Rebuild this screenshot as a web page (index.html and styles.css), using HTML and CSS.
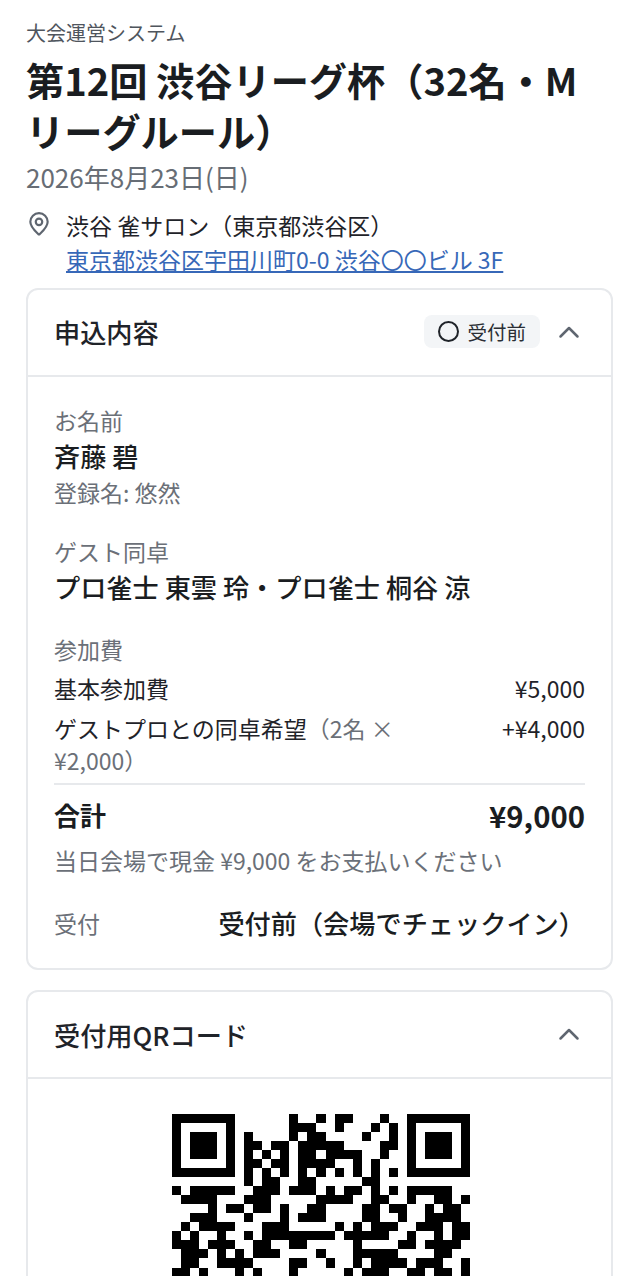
FILE: index.html
```html
<!DOCTYPE html>
<html lang="ja">
<head>
<meta charset="utf-8">
<title>受付</title>
<link rel="stylesheet" href="styles.css">
</head>
<body>
<div class="page">
  <header class="head">
    <div class="sys">大会運営システム</div>
    <h1 class="title">第12回 渋谷リーグ杯（32名・Mリーグルール）</h1>
    <div class="date">2026年8月23日(日)</div>
    <div class="venue">
      <svg class="pin" viewBox="0 0 24 24" width="26" height="26" fill="none" stroke="#5f6670" stroke-width="2" stroke-linecap="round" stroke-linejoin="round"><path d="M20 10c0 5-5.500 9.500-7.400 11.400a.8.8 0 0 1-1.200 0C9.500 19.500 4 15 4 10a8 8 0 0 1 16 0Z"/><circle cx="12" cy="10" r="3"/></svg>
      <div class="vtext">
        <div class="vname">渋谷 雀サロン（東京都渋谷区）</div>
        <a class="vaddr" href="#">東京都渋谷区宇田川町0-0 渋谷〇〇ビル 3F</a>
      </div>
    </div>
  </header>

  <section class="card">
    <div class="card-head">
      <h2 class="card-title">申込内容</h2>
      <span class="badge"><svg viewBox="0 0 21 21" width="21" height="21" fill="none" stroke="#1f2329" stroke-width="2"><circle cx="10.500" cy="10.500" r="9.500"/></svg>受付前</span>
      <svg class="chev" viewBox="0 0 24 24" width="24" height="24" fill="none" stroke="#5f6670" stroke-width="2.500" stroke-linecap="round" stroke-linejoin="round"><path d="m3.500 16.500 8.500-8.500 8.500 8.500"/></svg>
    </div>
    <div class="card-body">
      <div class="group">
        <div class="label">お名前</div>
        <div class="value">斉藤 碧</div>
        <div class="sub">登録名: 悠然</div>
      </div>
      <div class="group">
        <div class="label">ゲスト同卓</div>
        <div class="value">プロ雀士 東雲 玲・プロ雀士 桐谷 涼</div>
      </div>
      <div class="fees">
        <div class="label">参加費</div>
        <div class="fee"><span>基本参加費</span><span class="amt">¥5,000</span></div>
        <div class="fee"><span class="fee-name">ゲストプロとの同卓希望<span class="muted">（2名 ×</span> <span class="muted">¥2,000）</span></span><span class="amt">+¥4,000</span></div>
        <div class="total"><span class="total-label">合計</span><span>¥9,000</span></div>
        <div class="note">当日会場で現金 ¥9,000 をお支払いください</div>
      </div>
      <div class="recv"><span class="recv-label">受付</span><span class="recv-value">受付前（会場でチェックイン）</span></div>
    </div>
  </section>

  <section class="card">
    <div class="card-head">
      <h2 class="card-title card-title-qr">受付用QRコード</h2>
      <svg class="chev" viewBox="0 0 24 24" width="24" height="24" fill="none" stroke="#5f6670" stroke-width="2.500" stroke-linecap="round" stroke-linejoin="round"><path d="m3.500 16.500 8.500-8.500 8.500 8.500"/></svg>
    </div>
    <div class="qr-body">
      <svg class="qr" viewBox="0 0 33 33" width="298" height="298" shape-rendering="crispEdges">
        <path fill-rule="evenodd" d="M0 0h7v7h-7zM1 1v5h5v-5zM2 2h3v3h-3zM26 0h7v7h-7zM27 1v5h5v-5zM28 2h3v3h-3z"/>
        <path fill="none" stroke="#000" stroke-width="1" d="M13 .5h1M16 .5h1M18 .5h2M23 .5h1
        M13 1.500h3M18 1.500h1M22 1.500h1M24 1.500h1
        M8 2.500h1M13 2.500h1M15 2.500h2M21 2.500h1M24 2.500h1
        M8 3.500h2M11 3.500h2M14 3.500h5M23 3.500h2
        M8 4.500h1M10 4.500h1M12 4.500h1M14 4.500h2M17 4.500h4M23 4.500h1
        M8 5.500h2M11 5.500h2M14 5.500h4M20 5.500h1M22 5.500h1
        M8 6.500h1M10 6.500h1M12 6.500h1M14 6.500h1M16 6.500h1M18 6.500h1M20 6.500h1M22 6.500h1M24 6.500h1
        M8 7.500h1M10 7.500h2M14 7.500h2M21 7.500h2
        M0 8.500h1M2 8.500h5M9 8.500h3M13 8.500h3M17 8.500h1M19 8.500h2M22 8.500h1M24 8.500h1M26 8.500h5
        M1 9.500h4M8 9.500h3M16 9.500h4M22 9.500h2M26 9.500h1M29 9.500h2M32 9.500h1
        M4 10.500h1M6 10.500h2M9 10.500h2M12 10.500h1M15 10.500h2M21 10.500h2M24 10.500h2M28 10.500h1M30 10.500h2
        M2 11.500h3M8 11.500h1M12 11.500h1M14 11.500h3M21 11.500h2M25 11.500h1M28 11.500h4
        M1 12.500h1M3 12.500h4M10 12.500h3M18 12.500h1M20 12.500h1M22 12.500h3M27 12.500h3M31 12.500h2
        M0 13.500h1M2 13.500h1M5 13.500h1M8 13.500h1M10 13.500h8M19 13.500h5M26 13.500h1M29 13.500h1M31 13.500h2
        M0 14.500h3M4 14.500h3M9 14.500h2M13 14.500h2M20 14.500h1M25 14.500h2M28 14.500h4
        M1 15.500h3M5 15.500h1M7 15.500h1M9 15.500h3M16 15.500h1M20 15.500h5M29 15.500h2
        M1 16.500h2M5 16.500h4M13 16.500h2M17 16.500h1M20 16.500h1M22 16.500h4M27 16.500h3M32 16.500h1
        M0 17.500h2M3 17.500h1M7 17.500h1M9 17.500h1M13 17.500h1M19 17.500h1M21 17.500h3M26 17.500h2M29 17.500h2M32 17.500h1"/>
      </svg>
    </div>
  </section>
</div>
</body>
</html>
```
FILE: styles.css
```css
* { box-sizing: border-box; }
html, body { margin: 0; padding: 0; }
body { background: #fff; color: #1a1d21; font-family: "Noto Sans CJK JP", "Noto Sans", sans-serif; height: 1276px; overflow: hidden; }
.page { padding: 19px 25px 0 26px; height: 1276px; overflow: hidden; }
.head { margin-bottom: 12px; }
.sys { font-size: 20px; line-height: 28px; color: #4f555d; }
.title { margin: 7px 0 0; font-size: 38.200px; line-height: 51px; font-weight: 700; color: #1a1d21; }
.date { margin-top: 1px; font-size: 26px; line-height: 40px; color: #676d75; }
.venue { display: flex; gap: 14px; margin-top: 11px; }
.pin { flex: none; margin-top: 3px; }
.vtext { line-height: 34px; }
.vname { font-size: 23px; line-height: 34px; color: #1f2329; }
.vaddr { display: block; font-size: 23px; line-height: 34px; color: #3768b8; text-decoration: underline; }
.card { border: 2px solid #e7e9ec; border-radius: 12px; margin-bottom: 20px; background: #fff; }
.card-head { display: flex; align-items: center; height: 87px; padding: 0 30px 2px 26px; border-bottom: 2px solid #e7e9ec; }
.card-title { margin: 0 auto 0 0; font-size: 26.200px; line-height: 38px; font-weight: 500; color: #1f2329; }
.card-title-qr { padding-top: 2px; }
.badge { display: flex; align-items: center; gap: 8px; height: 33px; padding: 0 14px; border-radius: 8px; background: #f3f5f7; font-size: 19.500px; color: #2a2e34; margin-right: 17px; }
.chev { flex: none; }
.card-body { padding: 26px 26px 26px; }
.group { margin-bottom: 25px; }
.label { font-size: 23px; line-height: 34px; color: #6b7078; }
.value { font-size: 26.200px; font-weight: 500; line-height: 38px; color: #1a1d21; }
.sub { font-size: 23px; line-height: 34px; color: #6b7078; }
.fees { margin-top: 26px; }
.fee { display: flex; justify-content: space-between; gap: 40px; font-size: 23px; line-height: 32px; margin-top: 6px; color: #1f2329; }
.fee + .fee { margin-top: 8px; }
.fee-name { max-width: 350px; }
.muted { color: #6b7078; }
.amt { flex: none; }
.total { display: flex; justify-content: space-between; align-items: center; margin-top: 7px; padding-top: 10px; border-top: 2px solid #e7e9ec; font-size: 29.300px; font-weight: 700; line-height: 40px; }
.total-label { font-size: 26px; }
.note { font-size: 23px; line-height: 34px; color: #6b7078; margin-top: 8px; }
.recv { display: flex; justify-content: space-between; align-items: center; margin-top: 27px; height: 38px; }
.recv-label { font-size: 23px; color: #6b7078; }
.recv-value { font-size: 26.200px; font-weight: 500; }
.qr-body { display: flex; justify-content: center; padding: 35px 0 0 2px; }
.qr { display: block; }
```
